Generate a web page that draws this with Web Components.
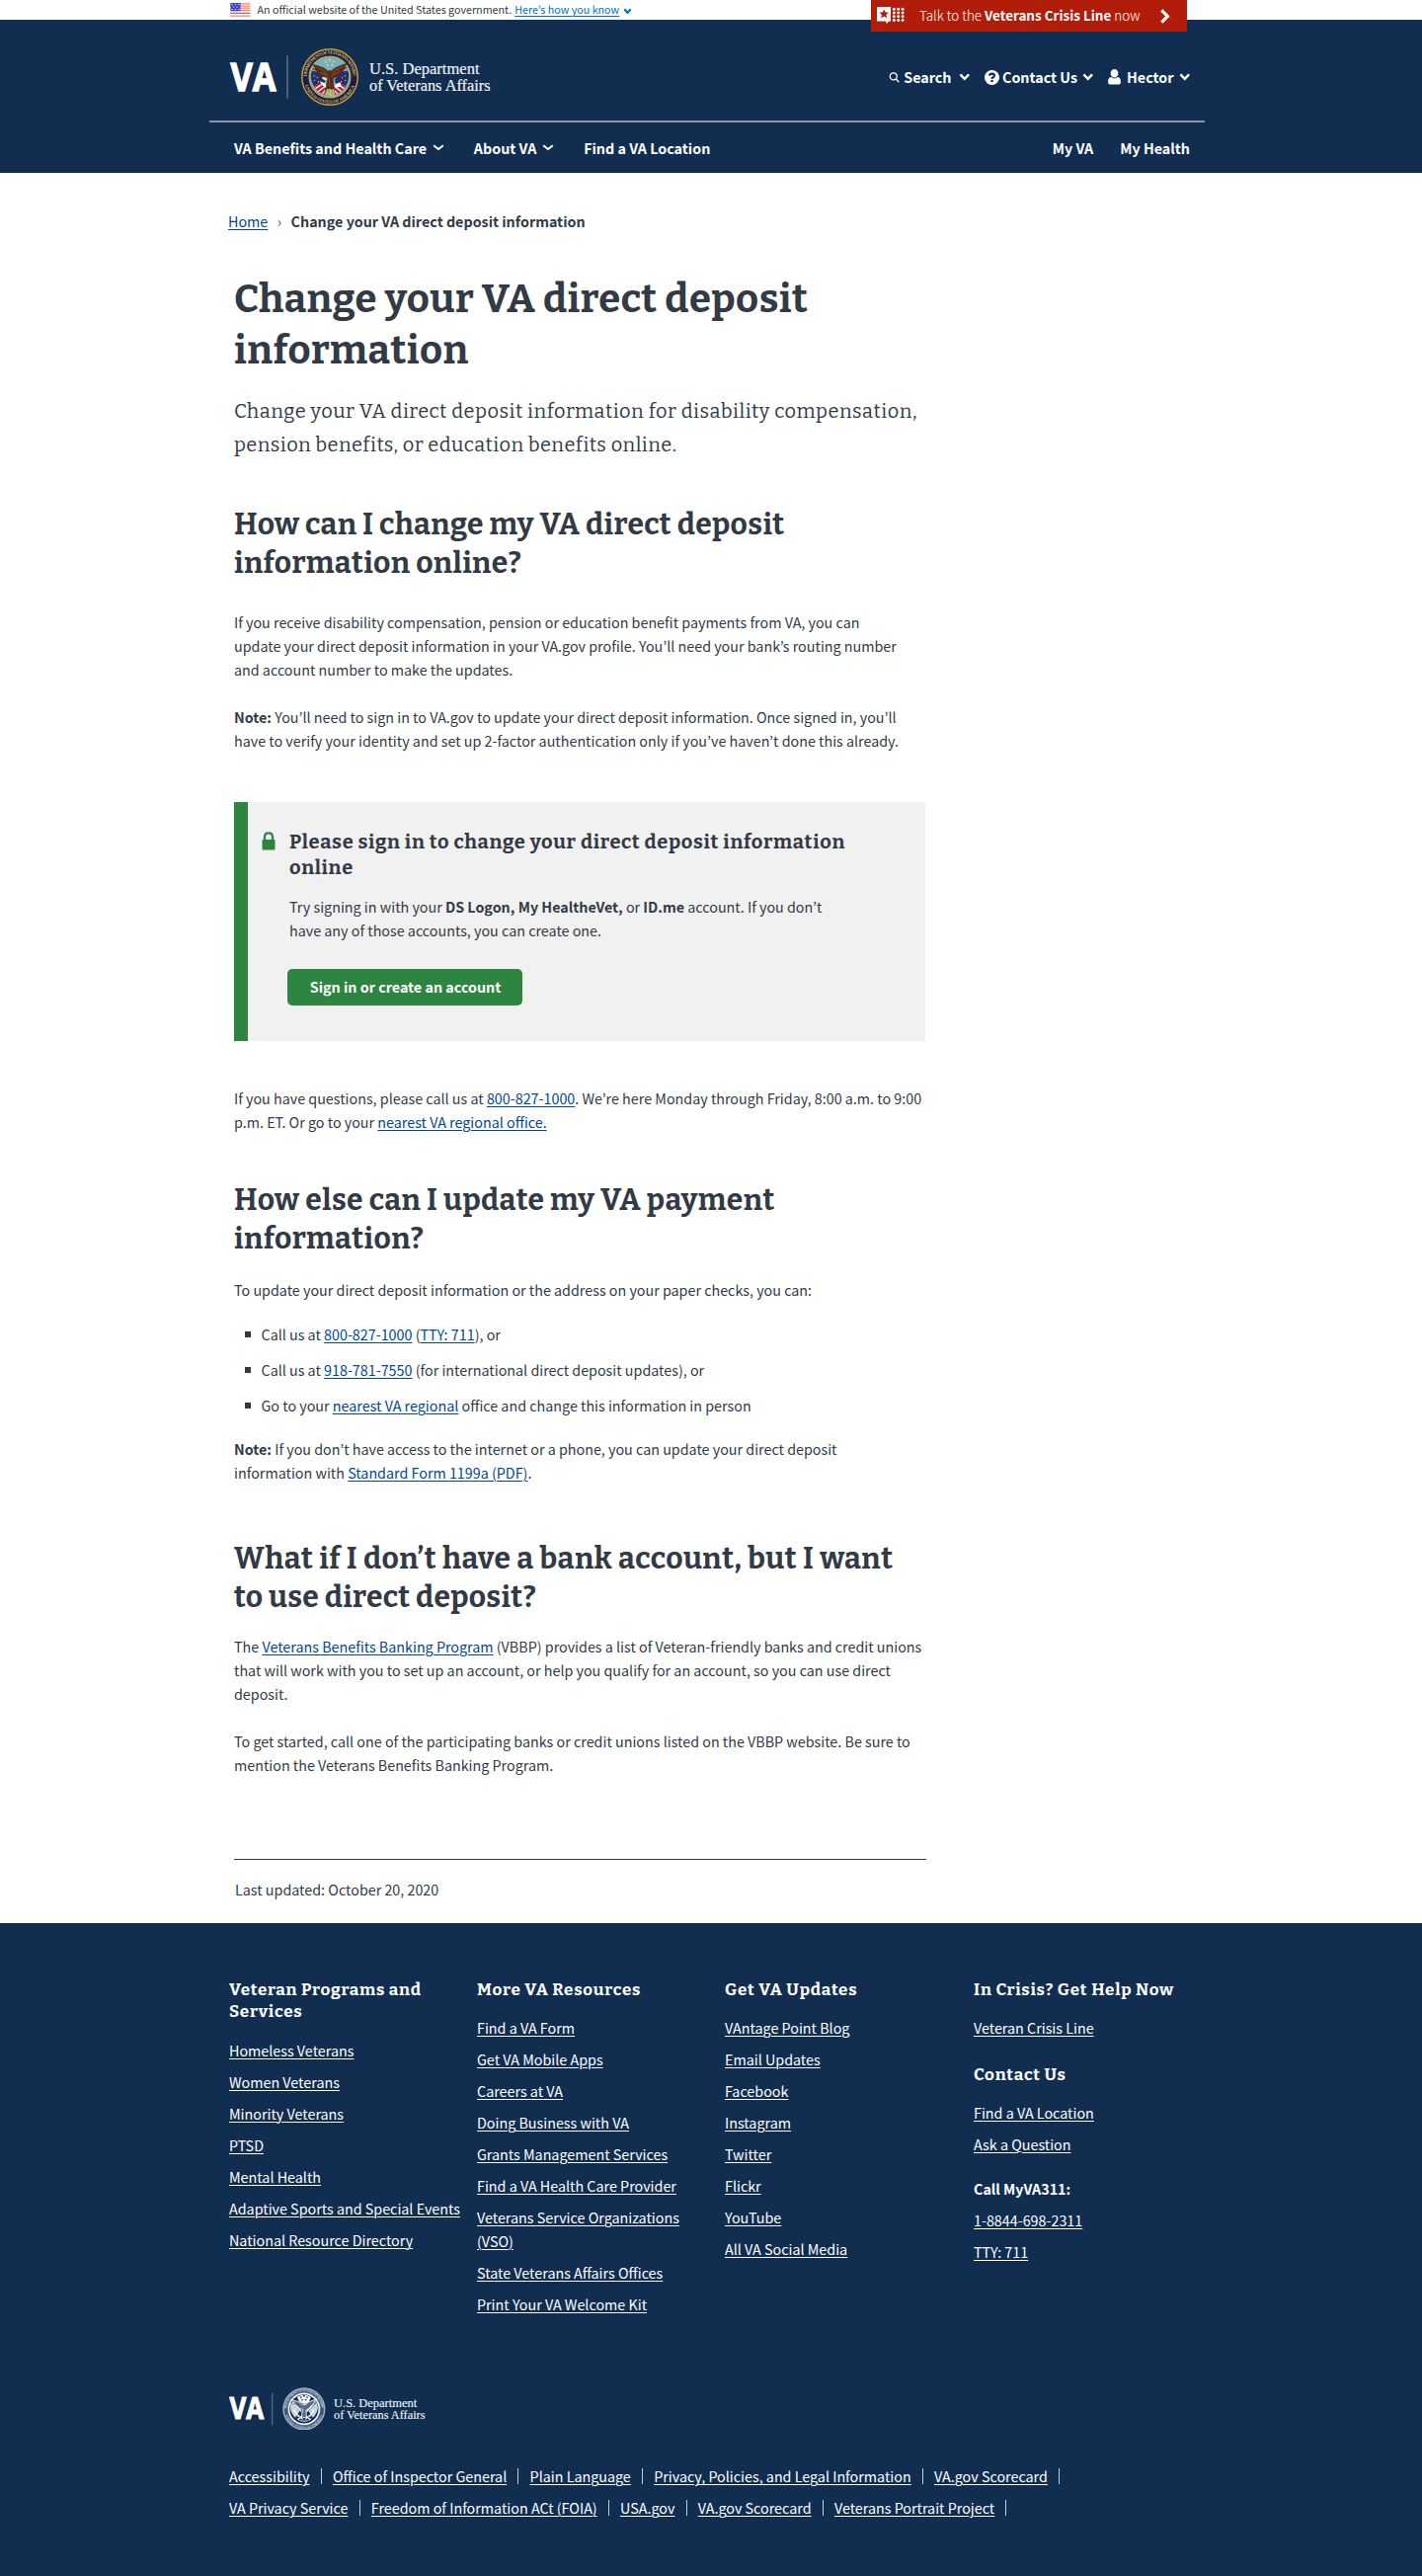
<!DOCTYPE html>
<html lang="en">
<head>
<meta charset="utf-8">
<title>Change your VA direct deposit information</title>
<style>
  :root { --sans: "Noto Sans CJK KR", "Noto Sans", sans-serif; --slab: Bitter, "DejaVu Serif Condensed", serif; --navy: #112e51; --ink: #323a45; --link: #004795; }
  body { margin: 0; background: #fff; color: var(--ink); font: 14.32px/24px var(--sans); }
  main { width: 702px; margin-left: 237px; height: 1772px; display: flex; flex-direction: column; align-items: flex-start; white-space: nowrap; }
  p, ul { margin: 0; padding: 0; }
  main a { color: var(--link); text-decoration: underline; text-underline-offset: 2px; text-decoration-thickness: 1px; }
  ul { list-style: none; display: flex; flex-direction: column; gap: 12px; margin-top: 21px; }
  li { display: flex; align-items: center; gap: 10.5px; padding-left: 11px; }
  li::before { content: ""; width: 6px; height: 6px; background: var(--ink); }
  hr { width: 701px; height: 1px; border: 0; margin: 83px 0 0; background: var(--ink); }
</style>
</head>
<body>
<va-header></va-header>
<main>
  <va-breadcrumb><a slot="home" href="#">Home</a>Change your VA direct deposit information</va-breadcrumb>
  <va-heading level="1" style="margin-top:41px;letter-spacing:.46px">Change your VA direct deposit<br>information</va-heading>
  <va-heading level="intro" style="margin-top:18.5px;letter-spacing:.48px">Change your VA direct deposit information for disability compensation,<br><span style="letter-spacing:.42px">pension benefits, or education benefits online.</span></va-heading>
  <va-heading level="2" style="margin-top:45px;letter-spacing:.36px">How can I change my VA direct deposit<br>information online?</va-heading>
  <p style="margin-top:27.5px">If you receive disability compensation, pension or education benefit payments from VA, you can<br>update your direct deposit information in your VA.gov profile. You’ll need your bank’s routing number<br>and account number to make the updates.</p>
  <p style="margin-top:24px"><b>Note:</b> You’ll need to sign in to VA.gov to update your direct deposit information. Once signed in, you’ll<br>have to verify your identity and set up 2-factor authentication only if you’ve haven’t done this already.</p>
  <va-signin-alert>
    <span slot="title">Please sign in to change your direct deposit information<br>online</span>
    Try signing in with your <b>DS Logon, My HealtheVet,</b> or <b>ID.me</b> account. If you don’t<br>have any of those accounts, you can create one.
    <span slot="action">Sign in or create an account</span>
  </va-signin-alert>
  <p style="margin-top:46px">If you have questions, please call us at <a href="#">800-827-1000</a>. We’re here Monday through Friday, 8:00 a.m. to 9:00<br>p.m. ET. Or go to your <a href="#">nearest VA regional office.</a></p>
  <va-heading level="2" style="margin-top:48.5px;letter-spacing:.41px">How else can I update my VA payment<br>information?</va-heading>
  <p style="margin-top:19.5px">To update your direct deposit information or the address on your paper checks, you can:</p>
  <ul>
    <li><span>Call us at <a href="#">800-827-1000</a> (<a href="#">TTY: 711</a>), or</span></li>
    <li><span>Call us at <a href="#">918-781-7550</a> (for international direct deposit updates), or</span></li>
    <li><span>Go to your <a href="#">nearest VA regional</a> office and change this information in person</span></li>
  </ul>
  <p style="margin-top:20px"><b>Note:</b> If you don’t have access to the internet or a phone, you can update your direct deposit<br>information with <a href="#">Standard Form 1199a (PDF)</a>.</p>
  <va-heading level="2" style="margin-top:56.5px;letter-spacing:.48px">What if I don’t have a bank account, but I want<br><span style="letter-spacing:.3px">to use direct deposit?</span></va-heading>
  <p style="margin-top:17.5px">The <a href="#">Veterans Benefits Banking Program</a> (VBBP) provides a list of Veteran-friendly banks and credit unions<br>that will work with you to set up an account, or help you qualify for an account, so you can use direct<br>deposit.</p>
  <p style="margin-top:24px">To get started, call one of the participating banks or credit unions listed on the VBBP website. Be sure to<br>mention the Veterans Benefits Banking Program.</p>
  <hr>
  <p style="margin:18px 0 0 1px">Last updated: October 20, 2020</p>
</main>
<va-footer></va-footer>

<script>
const define = (name, css, html) => customElements.define(name, class extends HTMLElement {
  constructor() {
    super();
    this.attachShadow({ mode: 'open' }).innerHTML = `<style>:host,*{box-sizing:border-box}${css}</style>${typeof html === 'function' ? html(this) : html}`;
  }
});

/* Down chevron, sized by its w, h and s attributes */
define('va-chevron', ':host{display:inline-flex}svg{display:block}', el => {
  const w = +el.getAttribute('w') || 11.5, h = +el.getAttribute('h') || 7.5, s = +el.getAttribute('s') || 2.4;
  const m = s / 2 + .2;
  return `<svg width="${w}" height="${h}" fill="none" stroke="currentColor" stroke-width="${s}"><path d="M${m} ${m}L${w / 2} ${h - m - .3}L${w - m} ${m}"/></svg>`;
});

/* Department seal in full colour or in one colour */
const ringText = fill => `
  <defs><path id="up" d="M9.5 50a40.5 40.5 0 0 1 81 0"/><path id="down" d="M4 50a46 46 0 0 0 92 0"/></defs>
  <g fill="${fill}" font-family="Liberation Serif, serif" font-weight="700" font-size="8.2" aria-hidden="true">
  <text><textPath href="#up" textLength="124" startOffset="1">DEPARTMENT OF VETERANS AFFAIRS</textPath></text>
  <text><textPath href="#down" textLength="114" startOffset="15">UNITED STATES OF AMERICA</textPath></text></g>`;
const star = (x, y, r, f) => `<path fill="${f}" d="M${x} ${y - r}l${r * .3} ${r * .65}h${r * .7}l${-r * .55} ${r * .5}l${r * .2} ${r * .75}l${-r * .65} ${-r * .4}l${-r * .65} ${r * .4}l${r * .2} ${-r * .75}l${-r * .55} ${-r * .5}h${r * .7}z"/>`;
const stars = f => [[50, 20], [43, 23], [57, 23], [46, 29], [54, 29]].map(p => star(p[0], p[1], 2.9, f)).join('');
const wings = 'M48 52C44 48 38 51 33 46L36 45L27 42L31 41L23 36L28 36L21 29C31 31 43 34 47 42L50 39L53 41C57 34 69 31 79 27L73 34L77 34L70 39L73 40L65 44L67 46C62 51 57 49 55 53C56 60 54 66 57 72L50 69L43 73C46 66 44 59 48 52Z';
define('va-seal', ':host{display:block}svg{display:block;width:100%;height:100%}', el => el.hasAttribute('mono') ? `
  <svg viewBox="0 0 100 100"><circle cx="50" cy="50" r="49" fill="#7188a2"/><circle cx="50" cy="50" r="48" fill="none" stroke="#b9c4d0" stroke-width="1.8"/>
  <circle cx="50" cy="50" r="42" fill="none" stroke="#3d5675" stroke-width="7"/>${ringText('#cfd8e2')}
  <circle cx="50" cy="50" r="35" fill="#112e51" stroke="#fff" stroke-width="3.2"/>
  <path fill="#fff" d="M34 22Q50 13 66 22L61 34L53 38L48 38L39 33Z"/>${stars('#112e51')}
  <path fill="#c9d3de" d="M20 34L40 54L30 70Q20 62 18 48ZM80 34L60 54L70 70Q80 62 82 48Z"/>
  <path fill="#526b88" stroke="#fff" stroke-width="2" d="${wings}"/>
  <path fill="none" stroke="#fff" stroke-width="3" d="M31 42L44 56M69 42L56 56M26 52L38 68M74 52L62 68M35 75L45 67M65 75L55 67"/>
  <path fill="none" stroke="#e8edf3" stroke-width="2" d="M34 73Q50 84 66 73M38 64L48 76M62 64L52 76"/></svg>` : `
  <svg viewBox="0 0 100 100"><circle cx="50" cy="50" r="48.7" fill="#1b1e4c" stroke="#c9a12f" stroke-width="2.4"/>
  ${ringText('#cbb35c')}
  <circle cx="50" cy="50" r="36" fill="#71b1cf" stroke="#d2a82d" stroke-width="2"/>
  ${stars('#f2cc2e')}
  <path fill="#262e68" d="M19 39L31 42L42 55L36 71L24 69Q16 58 17 45ZM81 39L69 42L58 55L64 71L76 69Q84 58 83 45Z"/>
  <g fill="#fff"><circle cx="23" cy="48" r="1"/><circle cx="28" cy="51" r="1"/><circle cx="23" cy="56" r="1"/><circle cx="30" cy="58" r="1"/><circle cx="77" cy="48" r="1"/><circle cx="72" cy="51" r="1"/><circle cx="77" cy="56" r="1"/><circle cx="70" cy="58" r="1"/></g>
  <path fill="#b92735" d="M22 65L34 59L43 65L47 73L40 81Q27 76 22 65ZM78 65L66 59L57 65L53 73L60 81Q73 76 78 65Z"/>
  <path fill="none" stroke="#fff" stroke-width="2.3" d="M25 70L37 62M30 75L42 66M75 70L63 62M70 75L58 66M37 79L44 71M63 79L56 71"/>
  <path fill="#fff" d="M32 57L42 61L45 70L38 65ZM59 63L68 59L70 66L60 69Z"/>
  <path fill="#572d18" stroke="#572d18" stroke-width="2.4" d="${wings}"/><path fill="none" stroke="#874c27" stroke-width="1.8" d="M27 33Q39 36 46 46M33 42Q41 43 47 50M73 32Q61 36 54 45M67 41Q59 43 53 50M49 53V67"/>
  <path fill="#f5f3e6" d="M36 50L42 51L44 56L38 54Z"/>
  <path fill="none" stroke="#eac32f" stroke-width="2.2" d="M46 71L44 81M51 71V85M55 71L57 80M46 78L56 83"/></svg>`);

/* Wordmark, divider, seal and department name */
define('va-logo', ':host{display:block;font-weight:400}.row{display:flex;align-items:center}.row>svg{display:block;overflow:visible;flex:none}va-seal{flex:none}', el => {
  const k = el.hasAttribute('mono') ? .755 : 1;
  return `<div class="row">
    <svg width="${59 * k}" height="${58 * k}" viewBox="0 0 59 58">
      <text x=".5" y="42.500" fill="#fff" stroke="#fff" stroke-width="1.300" font-family="Open Sans, sans-serif" font-size="39.500" font-weight="700" textLength="46" lengthAdjust="spacingAndGlyphs">VA</text>
      <path d="M58 7.500V50.500" stroke="#8593a6" stroke-width="1"/></svg>
    <va-seal ${k < 1 ? 'mono' : ''} style="width:${58 * k}px;height:${58 * k}px;margin-left:${12.5 * k}px"></va-seal>
    <svg width="${124 * k}" height="${58 * k}" viewBox="0 0 124 58" style="margin-left:${11.5 * k}px">
      <g fill="#eef1f5" stroke="#eef1f5" stroke-width=".2" font-family="Liberation Serif, serif" font-size="17.600" font-weight="400"><text x="0" y="26.200" textLength="111.500" lengthAdjust="spacingAndGlyphs">U.S. Department</text><text x="0" y="42.700" textLength="122.500" lengthAdjust="spacingAndGlyphs">of Veterans Affairs</text></g></svg>
  </div>`;
});

define('va-crisis-line', `:host{display:flex;flex:none;align-items:center;width:320px;height:32px;background:#b21d0a;color:#fff;font-size:13.46px;line-height:31px;white-space:nowrap;padding:0 17px 0 6px}
  .icon{margin-right:15px;flex:none}span{width:227px;height:32px;font-weight:300}b{font-weight:700}.go{margin-left:auto}`, `
  <svg class="icon" width="28" height="18"><path fill="#fff" d="M1 0H14V14.500H12L10 17L9 14.500H1Q0 14.500 0 13.500V1Q0 0 1 0Z"/>${star(7.2, 7.2, 4.8, '#b21d0a')}
  ${[0, 1, 2, 3].map(r => [0, 1, 2].map(c => `<circle cx="${17.3 + c * 4.4}" cy="${2.300 + r * 3.750}" r="1.450" fill="#fff"/>`).join('')).join('')}</svg>
  <span>Talk to the <b>Veterans Crisis Line</b> now</span>
  <svg class="go" width="10" height="15" fill="none" stroke="#fff" stroke-width="3.200"><path d="M1.300 1.300L7.300 7.500L1.300 13.700"/></svg>`);

define('va-header', `:host{display:block;height:175px;background:var(--navy);color:#fff;white-space:nowrap}
  .gov{height:20px;background:#fff;display:flex;align-items:flex-start;padding-left:233px;color:var(--ink);font-size:10.74px;line-height:19px}
  .gov a{color:#0071bb;margin:0 4px 0 3px;text-underline-offset:2px;text-decoration-thickness:1px}.flag{margin:3px 7px 0 0}.gov va-chevron{color:#0071bb;margin-top:7.5px}
  va-crisis-line{margin:0 238px 0 auto}
  .brand{width:1008px;margin-left:212px;height:104px;border-bottom:2px solid #8996a8;display:flex;align-items:flex-start;padding-left:21px;font-weight:700}
  va-logo{margin-top:28.500px}
  .tools{display:flex;align-items:center;height:24px;margin:46px 15px 0 auto}
  nav{width:968px;margin-left:237px;height:51px;display:flex;align-items:center;font-weight:700;line-height:24px}
  nav va-chevron{margin:0 30.3px 0 5.5px}nav .end{margin-left:auto;display:flex;gap:27px}`, `
  <div class="gov">
    <svg class="flag" width="20.500" height="14" viewBox="0 0 20.500 14"><path fill="#fff" d="M0 0H20.500V14H0Z"/><path stroke="#ff8067" stroke-width="1.250" d="M0 .8H20.500M0 3H20.500M0 5.200H20.500M0 7.400H20.500M0 13.200H20.500"/><path stroke="#e84e37" stroke-width="1.200" d="M0 10.300H20.500"/><path fill="#3442d9" d="M.5 0H10.500V8.300H.5Z"/><path stroke="#fff" stroke-width="1" stroke-dasharray="1.200 2.200" d="M1.500 1.500H10M3 4H10M1.500 6.500H10"/></svg>
    <span>An official website of the United States government.</span><a href="#">Here’s how you know</a><va-chevron w="9" h="6.500" s="2.200"></va-chevron>
    <va-crisis-line></va-crisis-line>
  </div>
  <div class="brand"><va-logo></va-logo>
    <div class="tools">
      <svg width="11" height="11" fill="none" stroke="#fff" stroke-width="1.300"><circle cx="4.800" cy="4.300" r="3.500"/><path d="M7.300 7L10.300 10.200"/></svg><span style="margin:0 7px 0 4px">Search</span><va-chevron></va-chevron>
      <svg style="margin:0 3px 0 15px" width="15" height="15"><circle cx="7.500" cy="7.500" r="7.500" fill="#fff"/><path fill="none" stroke="#112e51" stroke-width="2.100" d="M4.900 5.700Q5.200 3.600 7.600 3.600Q10 3.700 10 5.600Q9.900 6.700 8.500 7.300Q7.500 7.700 7.500 9"/><path fill="#112e51" d="M6.400 10H8.700V12.100H6.400Z"/></svg><span style="margin-right:4.500px">Contact Us</span><va-chevron></va-chevron>
      <svg style="margin:0 6px 0 15px" width="13" height="16"><path fill="#fff" d="M6.500 0C8.600 0 10.400 1.800 10.400 4.200S8.700 8.500 6.500 8.500S2.600 6.600 2.600 4.200S4.400 0 6.500 0ZM3 8.100Q6.500 11 10 8.100Q13 8.900 13 13Q13 15.500 11 15.500H2Q0 15.500 0 13Q0 8.900 3 8.100Z"/></svg><span style="margin-right:5px">Hector</span><va-chevron></va-chevron>
    </div></div>
  <nav><span>VA Benefits and Health Care</span><va-chevron w="12" h="6.500" s="2"></va-chevron><span>About VA</span><va-chevron w="12" h="6.500" s="2"></va-chevron><span>Find a VA Location</span><div class="end"><span>My VA</span><span>My Health</span></div></nav>`);

define('va-breadcrumb', `:host{display:flex;margin:36.500px 0 0 -6px;font-weight:700}::slotted(a){font-weight:400}i{font-style:normal;font-weight:400;color:#315f9c;margin:0 9.500px}`,
  `<slot name="home"></slot><i>›</i><span><slot></slot></span>`);

define('va-heading', `:host{display:block;font-family:var(--slab);font-weight:700}
  :host([level="1"]){font-size:40px;line-height:52px}:host([level="2"]){font-size:30px;line-height:39px}
  :host([level="3"]){font-size:20px;line-height:26px}:host([level="intro"]){font-size:20px;line-height:34px;font-weight:400}`, '<slot></slot>');

define('va-signin-alert', `:host{display:block;width:700px;height:242px;margin-top:50px;background:#f1f1f1;border-left:14px solid #2e8540;padding:27.500px 0 0 14px}
  .row{display:flex}svg{margin:2.500px 14px 0 0}.body{margin:14.500px 0 0 28px}.btn{display:flex;justify-content:center;align-items:center;width:238px;height:37px;margin:27px 0 0 26px;padding:0 0 1px 1px;background:#2e8540;border-radius:5px;color:#fff;font-weight:700}`, `
  <div class="row"><svg width="14" height="19"><path fill="none" stroke="#2e8540" stroke-width="2.300" d="M3 9V5.200Q3 1.400 7 1.400Q11 1.400 11 5.200V9"/><rect x=".5" y="8" width="13" height="10.500" rx="1" fill="#2e8540"/></svg>
  <va-heading level="3" style="letter-spacing:.66px"><slot name="title"></slot></va-heading></div>
  <div class="body"><slot></slot></div><div class="btn"><slot name="action"></slot></div>`);

define('va-link-list', `:host{display:flex;flex-direction:column;gap:8px;align-items:flex-start}a{color:#fff;text-underline-offset:2px;text-decoration-thickness:1px}`,
  el => el.getAttribute('items').split('|').map(t => `<a href="#">${t}</a>`).join(''));

define('va-footer', `:host{display:block;height:661px;background:var(--navy);color:#fff;white-space:nowrap;padding:56.500px 0 0 232px}
  .cols{display:grid;grid-template-columns:251px 251px 252px 230px;height:413px;align-items:start}
  h3{margin:0;font:700 17px/22px var(--slab);letter-spacing:.74px}va-link-list{margin-top:15.500px}
  .legal{display:flex;flex-direction:column;gap:8px;margin-top:35px}.legal div{display:flex;align-items:center}
  .legal a{color:#fff;text-underline-offset:2px;text-decoration-thickness:1px}.legal i{width:1px;height:16px;background:#c3ccd6;margin:0 11.200px}`, `
  <div class="cols">
    <section><h3 style="padding-top:.5px">Veteran Programs and<br>Services</h3><va-link-list items="Homeless Veterans|Women Veterans|Minority Veterans|PTSD|Mental Health|Adaptive Sports and Special Events|National Resource Directory"></va-link-list></section>
    <section><h3>More VA Resources</h3><va-link-list items="Find a VA Form|Get VA Mobile Apps|Careers at VA|Doing Business with VA|Grants Management Services|Find a VA Health Care Provider|Veterans Service Organizations<br>(VSO)|State Veterans Affairs Offices|Print Your VA Welcome Kit"></va-link-list></section>
    <section><h3>Get VA Updates</h3><va-link-list items="VAntage Point Blog|Email Updates|Facebook|Instagram|Twitter|Flickr|YouTube|All VA Social Media"></va-link-list></section>
    <section><h3>In Crisis? Get Help Now</h3><va-link-list items="Veteran Crisis Line"></va-link-list>
      <h3 style="margin-top:24.500px">Contact Us</h3><va-link-list items="Find a VA Location|Ask a Question"></va-link-list>
      <b style="display:block;margin:21px 0 -7.500px">Call MyVA311:</b><va-link-list items="1-8844-698-2311|TTY: 711"></va-link-list></section>
  </div>
  <va-logo mono></va-logo>
  <div class="legal">${[['Accessibility', 'Office of Inspector General', 'Plain Language', 'Privacy, Policies, and Legal Information', 'VA.gov Scorecard'], ['VA Privacy Service', 'Freedom of Information ACt (FOIA)', 'USA.gov', 'VA.gov Scorecard', 'Veterans Portrait Project']].map(r => `<div>${r.map(t => `<a href="#">${t}</a><i></i>`).join('')}</div>`).join('')}</div>`);
</script>
</body>
</html>
